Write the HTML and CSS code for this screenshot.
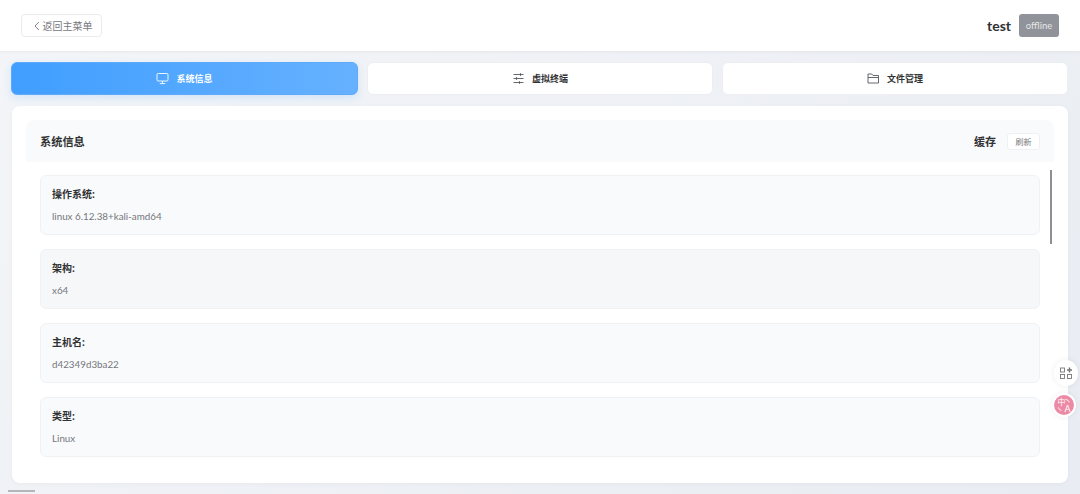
FILE: index.html
```html
<!DOCTYPE html>
<html lang="zh-CN">
<head>
  <meta charset="UTF-8">
  <title>test</title>
  <link rel="stylesheet" href="styles.css">
</head>
<body>
  <header class="top-bar">
    <button class="back-btn">
      <svg width="6" height="10" viewBox="0 0 6 10" fill="none" stroke="#707378" stroke-width="0.9"><path d="M4.8 1 1 5l3.8 4"/></svg>
      <span>返回主菜单</span>
    </button>
    <div class="server-info">
      <span class="server-name">test</span>
      <span class="status-tag">offline</span>
    </div>
  </header>

  <nav class="tabs">
    <div class="tab active">
      <svg width="13" height="13" viewBox="0 0 13 13" fill="none" stroke="currentColor" stroke-width="0.9"><rect x="1" y="1.5" width="11" height="7.5" rx="1.2"/><path d="M6.5 9v2.4M3.8 11.6h5.4"/></svg>
      <span>系统信息</span>
    </div>
    <div class="tab">
      <svg width="13" height="13" viewBox="0 0 13 13" fill="none" stroke="#55585e" stroke-width="0.9"><path d="M1.5 2.5h10M1.5 6.5h10M1.5 10.5h10"/><path d="M8.5 1.2v2.6M4.5 5.2v2.6M7.5 9.2v2.6" stroke-width="1.1"/></svg>
      <span>虚拟终端</span>
    </div>
    <div class="tab">
      <svg width="13" height="13" viewBox="0 0 13 13" fill="none" stroke="#55585e" stroke-width="0.9"><path d="M1 11V2h3.8l1.2 1.5h5.5V11z"/><path d="M1 5.5h10.5"/></svg>
      <span>文件管理</span>
    </div>
  </nav>

  <main class="panel">
    <div class="panel-head">
      <h2 class="panel-title">系统信息</h2>
      <div class="panel-actions">
        <span class="cache-label">缓存</span>
        <button class="refresh-btn">刷新</button>
      </div>
    </div>
    <div class="info-list">
      <div class="info-item">
        <div class="info-label">操作系统:</div>
        <div class="info-value">linux 6.12.38+kali-amd64</div>
      </div>
      <div class="info-item alt">
        <div class="info-label">架构:</div>
        <div class="info-value">x64</div>
      </div>
      <div class="info-item">
        <div class="info-label">主机名:</div>
        <div class="info-value">d42349d3ba22</div>
      </div>
      <div class="info-item">
        <div class="info-label">类型:</div>
        <div class="info-value">Linux</div>
      </div>
    </div>
    <div class="scroll-thumb"></div>
  </main>

  <div class="bottom-line"></div>

  <div class="float-btn apps">
    <svg width="12" height="12" viewBox="0 0 12 12" fill="none" stroke="#777" stroke-width="0.9"><rect x="0.5" y="1" width="4" height="4"/><rect x="0.5" y="7.5" width="4" height="4"/><rect x="7.5" y="7.5" width="4" height="4"/><path d="M9.5 0.4v5.2M7 3h5" stroke-width="1.5"/></svg>
  </div>
  <div class="float-btn translate">
    <span class="translate-zh">中</span><span class="translate-en">A</span>
    <svg class="translate-arrows" width="20" height="20" viewBox="0 0 20 20" fill="none" stroke="#fff" stroke-width="1"><path d="M11.5 4.5c2 .2 3.3 1.2 3.8 2.8M4.5 12.5c.3 1.5 1.3 2.5 2.8 2.8"/></svg>
  </div>
</body>
</html>
```

FILE: styles.css
```css
* {
  box-sizing: border-box;
}
html, body {
  height: 100%;
}
body {
  margin: 0;
  overflow: hidden;
  background: linear-gradient(135deg, #f3f5f8, #e9ecf2);
  font-family: "Open Sans", "Noto Sans CJK SC", sans-serif;
  color: #303133;
  position: relative;
}
button {
  font-family: inherit;
  cursor: pointer;
}

.top-bar {
  height: 51px;
  padding: 0 21px;
  background: #fff;
  display: flex;
  align-items: center;
  justify-content: space-between;
  box-shadow: 0 1px 3px rgba(0, 0, 0, 0.05);
}
.back-btn {
  width: 81px;
  height: 23px;
  padding: 0 0 0 3px;
  display: flex;
  align-items: center;
  justify-content: center;
  gap: 3px;
  background: #fff;
  border: 1px solid #e9ebee;
  border-radius: 4px;
  color: #76797e;
  font-size: 10px;
}
.server-info {
  display: flex;
  align-items: center;
  gap: 8px;
}
.server-name {
  font-family: "Lato", sans-serif;
  font-size: 14px;
  font-weight: 700;
  color: #303133;
}
.status-tag {
  width: 40px;
  height: 23px;
  line-height: 23px;
  text-align: center;
  background: #909399;
  border-radius: 3px;
  color: #e6e6e8;
  font-family: "Lato", sans-serif;
  font-size: 9.5px;
}

.tabs {
  display: grid;
  grid-template-columns: 347fr 346fr 346fr;
  gap: 9px;
  padding: 11px 12px 0 11px;
}
.tab {
  height: 33px;
  display: flex;
  align-items: center;
  justify-content: center;
  gap: 7px;
  background: #fff;
  border: 1px solid #eceef1;
  border-radius: 6px;
  color: #303133;
  font-size: 9px;
  font-weight: 700;
}
.tab.active {
  background: linear-gradient(90deg, #409eff, #66b1ff);
  border: 1px solid #5ea9f8;
  color: #fff;
  box-shadow: 0 3px 8px rgba(64, 158, 255, 0.18);
}

.panel {
  position: relative;
  height: 377px;
  margin: 11px 12px 0;
  padding: 14px;
  background: #fff;
  border-radius: 8px;
  overflow: hidden;
  box-shadow: 0 1px 4px rgba(0, 0, 0, 0.04);
}
.panel-head {
  height: 42px;
  padding: 0 14px;
  display: flex;
  align-items: center;
  justify-content: space-between;
  background: #f9fafb;
  border-radius: 8px 8px 0 0;
}
.panel-title {
  margin: 0;
  font-size: 11.2px;
  font-weight: 700;
  color: #303133;
}
.panel-actions {
  display: flex;
  align-items: center;
  gap: 11px;
}
.cache-label {
  font-size: 11px;
  font-weight: 700;
  color: #303133;
}
.refresh-btn {
  width: 33px;
  height: 17px;
  padding: 0;
  background: #fff;
  border: 1px solid #eff0f3;
  border-radius: 3px;
  color: #77797e;
  font-size: 8px;
}

.info-list {
  display: flex;
  flex-direction: column;
  gap: 14px;
  margin-top: 13px;
  padding: 0 14px;
}
.info-item {
  height: 60px;
  padding: 10px 11px;
  background: #f9fafb;
  border: 1px solid #eff1f3;
  border-radius: 6px;
}
.info-item.alt {
  background: #f6f7f8;
}
.info-label {
  font-size: 10px;
  line-height: 16px;
  font-weight: 700;
  color: #303133;
}
.info-value {
  margin-top: 6px;
  font-family: "Lato", sans-serif;
  font-size: 9.8px;
  line-height: 16px;
  color: #74777d;
}
.scroll-thumb {
  position: absolute;
  top: 64px;
  right: 16px;
  width: 2px;
  height: 74px;
  background: #8d8f94;
}

.bottom-line {
  position: absolute;
  left: 8px;
  bottom: 2px;
  width: 27px;
  height: 2px;
  background: #b4b6ba;
}
.float-btn {
  position: absolute;
  display: flex;
  align-items: center;
  justify-content: center;
  border-radius: 50%;
}
.float-btn.apps {
  top: 360px;
  right: 2px;
  width: 24px;
  height: 26px;
  background: #fff;
  box-shadow: 0 0 6px rgba(0, 0, 0, 0.07);
}
.float-btn.translate {
  top: 395px;
  right: 6px;
  width: 20px;
  height: 20px;
  background: #ec8aa6;
  color: #fff;
  box-shadow: 0 0 0 2px #fff, 0 0 6px 2px rgba(0, 0, 0, 0.07);
  font-size: 8px;
  line-height: 1;
}
.translate-zh {
  margin: -6px -1px 0 0;
}
.translate-en {
  font-family: "Lato", sans-serif;
  font-size: 9px;
  margin-top: 6px;
}
.translate-arrows {
  position: absolute;
  top: 0;
  left: 0;
}
```
